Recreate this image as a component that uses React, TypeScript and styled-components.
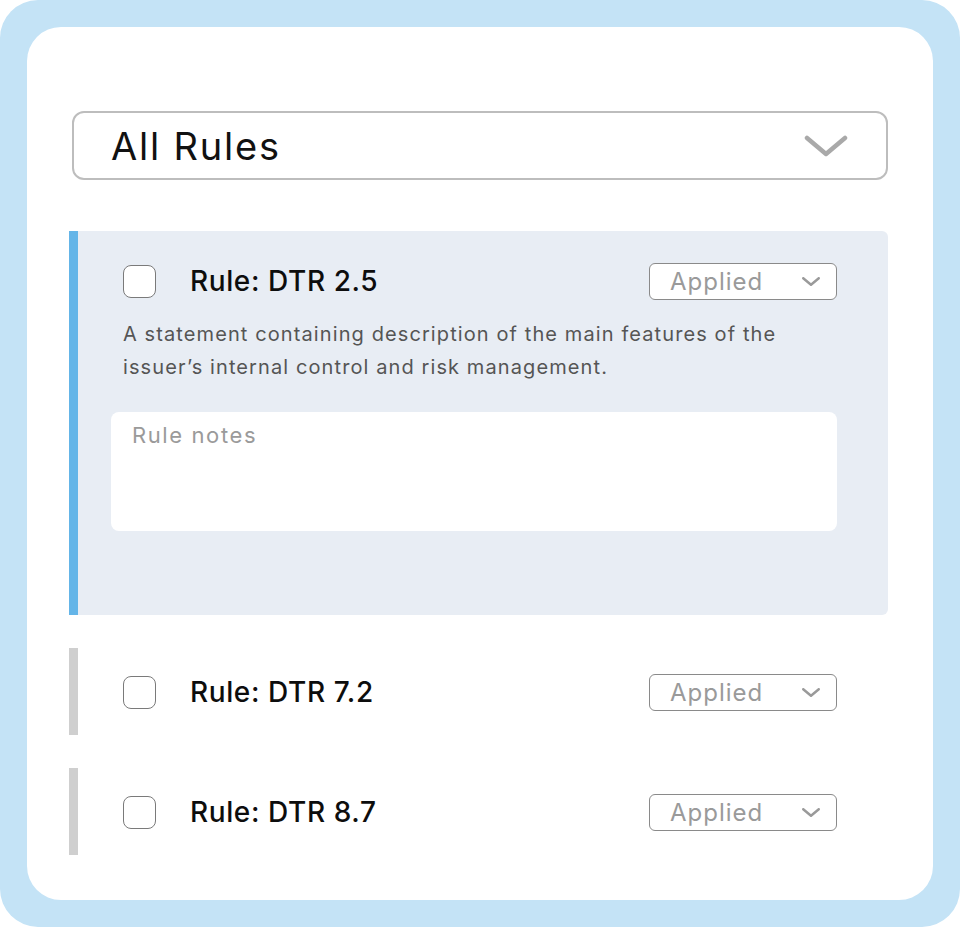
import styled, { createGlobalStyle } from "styled-components";

const GlobalStyle = createGlobalStyle`
  * {
    box-sizing: border-box;
  }

  body {
    margin: 0;
    background: #ffffff;
    font-family: Inter, "Noto Sans", "Liberation Sans", sans-serif;
  }
`;

const Frame = styled.div`
  width: 960px;
  height: 927px;
  padding: 27px;
  background-color: #c4e3f6;
  border-radius: 38px;
`;

const Card = styled.div`
  height: 100%;
  padding: 84px 45px 0 42px;
  background-color: #ffffff;
  border-radius: 34px;
`;

const FilterSelect = styled.div`
  display: flex;
  align-items: center;
  justify-content: space-between;
  height: 69px;
  margin-left: 3px;
  margin-bottom: 51px;
  padding: 0 38px 0 37px;
  border: 2px solid #bdbdbd;
  border-radius: 12px;
  font-size: 38px;
  letter-spacing: 1.8px;
  color: #111111;
`;

const RuleList = styled.div`
  display: flex;
  flex-direction: column;
  gap: 33px;
`;

const RuleItem = styled.div<{ $active?: boolean }>`
  display: flex;
  flex-direction: column;
  border-left: 9px solid ${({ $active }) => ($active ? "#64b5e8" : "#cfcfcf")};
  border-radius: 0 6px 6px 0;
  background-color: ${({ $active }) => ($active ? "#e8edf4" : "transparent")};
  padding: ${({ $active }) => ($active ? "31px 51px 84px 33px" : "25px 51px 24px 33px")};
`;

const RuleHeader = styled.div`
  display: flex;
  align-items: center;
  height: 38px;
  padding-left: 12px;
`;

const Checkbox = styled.span`
  flex: none;
  width: 33px;
  height: 33px;
  margin-right: 34px;
  background-color: #ffffff;
  border: 1px solid #7a7a7a;
  border-radius: 8px;
`;

const RuleTitle = styled.span`
  flex: 1;
  font-size: 28px;
  font-weight: 500;
  letter-spacing: 0.6px;
  color: #0d0d0d;
`;

const StatusSelect = styled.div`
  display: flex;
  align-items: center;
  justify-content: space-between;
  width: 188px;
  height: 37px;
  padding: 0 16px 0 20px;
  background-color: #ffffff;
  border: 1px solid #8a8a8a;
  border-radius: 6px;
  font-size: 24px;
  letter-spacing: 1px;
  color: #9a9a9a;
`;

const Description = styled.p`
  max-width: 680px;
  margin: 18px 0 28px 12px;
  font-size: 20px;
  line-height: 33px;
  letter-spacing: 1.1px;
  color: #555555;
`;

const Notes = styled.div`
  height: 119px;
  padding: 10px 21px;
  background-color: #ffffff;
  border-radius: 8px;
  font-size: 22px;
  letter-spacing: 1.6px;
  color: #9a9a9a;
`;

function Chevron({ size, weight, color }: { size: number; weight: number; color: string }) {
  return (
    <svg width={size} height={size / 2} viewBox="0 0 44 22" fill="none">
      <path
        d="M3 3 L22 19 L41 3"
        stroke={color}
        strokeWidth={weight}
        strokeLinecap="round"
        strokeLinejoin="round"
      />
    </svg>
  );
}

const rules = [
  {
    id: "DTR 2.5",
    active: true,
    text: "A statement containing description of the main features of the issuer\u2019s internal control and risk management.",
  },
  { id: "DTR 7.2", active: false, text: "" },
  { id: "DTR 8.7", active: false, text: "" },
];

export default function App() {
  return (
    <>
      <GlobalStyle />
      <Frame>
        <Card>
          <FilterSelect>
            <span>All Rules</span>
            <Chevron size={44} weight={4.5} color="#a9a9a9" />
          </FilterSelect>
          <RuleList>
            {rules.map((rule) => (
              <RuleItem key={rule.id} $active={rule.active}>
                <RuleHeader>
                  <Checkbox />
                  <RuleTitle>Rule: {rule.id}</RuleTitle>
                  <StatusSelect>
                    <span>Applied</span>
                    <Chevron size={18} weight={6} color="#9a9a9a" />
                  </StatusSelect>
                </RuleHeader>
                {rule.active && (
                  <>
                    <Description>{rule.text}</Description>
                    <Notes>Rule notes</Notes>
                  </>
                )}
              </RuleItem>
            ))}
          </RuleList>
        </Card>
      </Frame>
    </>
  );
}
